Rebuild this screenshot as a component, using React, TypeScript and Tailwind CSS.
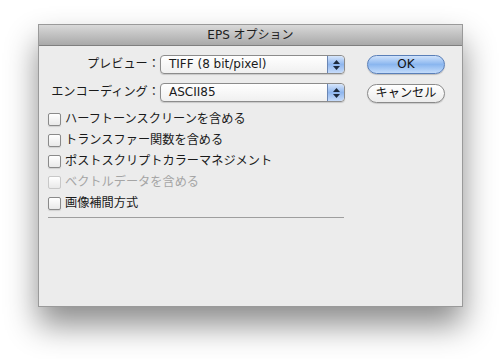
const jp = "font-['Lucida_Grande','DejaVu_Sans','Noto_Sans_CJK_JP',sans-serif]";

const options = [
  { label: "ハーフトーンスクリーンを含める", disabled: false },
  { label: "トランスファー関数を含める", disabled: false },
  { label: "ポストスクリプトカラーマネジメント", disabled: false },
  { label: "ベクトルデータを含める", disabled: true },
  { label: "画像補間方式", disabled: false },
];

function Stepper() {
  return (
    <div className="flex h-full w-[17px] flex-col items-center justify-center gap-[2px] rounded-r-[4px] border-l border-[#6b86b3] bg-gradient-to-b from-[#d7e6fb] via-[#8fb6ee] to-[#c7dcfa]">
      <svg width="7" height="4" viewBox="0 0 7 4">
        <path d="M3.5 0 L7 4 L0 4 Z" fill="#1d2a3d" />
      </svg>
      <svg width="7" height="4" viewBox="0 0 7 4">
        <path d="M0 0 L7 0 L3.5 4 Z" fill="#1d2a3d" />
      </svg>
    </div>
  );
}

function Popup({ value }: { value: string }) {
  return (
    <div className="flex h-[19px] w-[185px] items-stretch overflow-hidden rounded-[4px] border border-[#8c8c8c] bg-gradient-to-b from-white to-[#f0f0f0] shadow-[0_1px_1px_rgba(0,0,0,0.15)]">
      <span className="flex-1 pl-[8px] text-[12px] leading-[17px] text-[#1a1a1a]">{value}</span>
      <Stepper />
    </div>
  );
}

function Checkbox({ disabled }: { disabled: boolean }) {
  return (
    <span
      className={`h-[13px] w-[13px] shrink-0 rounded-[2px] border bg-gradient-to-b from-white to-[#e9e9e9] ${
        disabled ? "border-[#c8c8c8]" : "border-[#8a8a8a] shadow-[0_1px_1px_rgba(0,0,0,0.12)]"
      }`}
    />
  );
}

export default function App() {
  return (
    <div className={`h-[359px] w-[500px] overflow-hidden bg-white ${jp}`}>
      <div className="ml-[38px] mt-[24px] flex h-[283px] w-[425px] flex-col border border-[#9a9a9a] bg-[#ececec] shadow-[0_18px_30px_rgba(0,0,0,0.45)]">
        {/* Title bar */}
        <div className="flex h-[21px] shrink-0 items-center justify-center border-b border-[#7f7f7f] bg-gradient-to-b from-[#d9d9d9] to-[#a9a9a9] text-[12px] text-[#1e1e1e]">
          EPS オプション
        </div>

        <div className="flex pl-[9px] pt-[9px]">
          <div className="flex w-[297px] flex-col">
            <div className="flex h-[19px] items-center">
              <span className="w-[112px] whitespace-nowrap text-right text-[12.2px] text-[#1a1a1a]">プレビュー：</span>
              <Popup value="TIFF (8 bit/pixel)" />
            </div>
            <div className="mt-[9px] flex h-[19px] items-center">
              <span className="w-[112px] whitespace-nowrap text-right text-[12.2px] text-[#1a1a1a]">エンコーディング：</span>
              <Popup value="ASCII85" />
            </div>

            <div className="mt-[7px] flex flex-col">
              {options.map((o) => (
                <div key={o.label} className="flex h-[21px] items-center gap-[4px]">
                  <Checkbox disabled={o.disabled} />
                  <span className={`whitespace-nowrap text-[12.2px] ${o.disabled ? "text-[#a5a5a5]" : "text-[#1a1a1a]"}`}>
                    {o.label}
                  </span>
                </div>
              ))}
            </div>

            <div className="mt-[3px] h-px w-[296px] bg-[#9e9e9e]" />
          </div>

          <div className="ml-[22px] flex flex-col gap-[10px]">
            <button className="h-[19px] w-[78px] rounded-full border border-[#5a7fb8] bg-gradient-to-b from-[#cfe2fb] via-[#8ab6ef] to-[#c3dcfb] text-[12px] leading-[17px] text-[#111] shadow-[0_1px_1px_rgba(0,0,0,0.2)]">
              OK
            </button>
            <button className="h-[19px] w-[78px] rounded-full border border-[#8a8a8a] bg-gradient-to-b from-white to-[#ececec] text-[12.2px] leading-[17px] text-[#111] shadow-[0_1px_1px_rgba(0,0,0,0.15)]">
              キャンセル
            </button>
          </div>
        </div>
      </div>
    </div>
  );
}
